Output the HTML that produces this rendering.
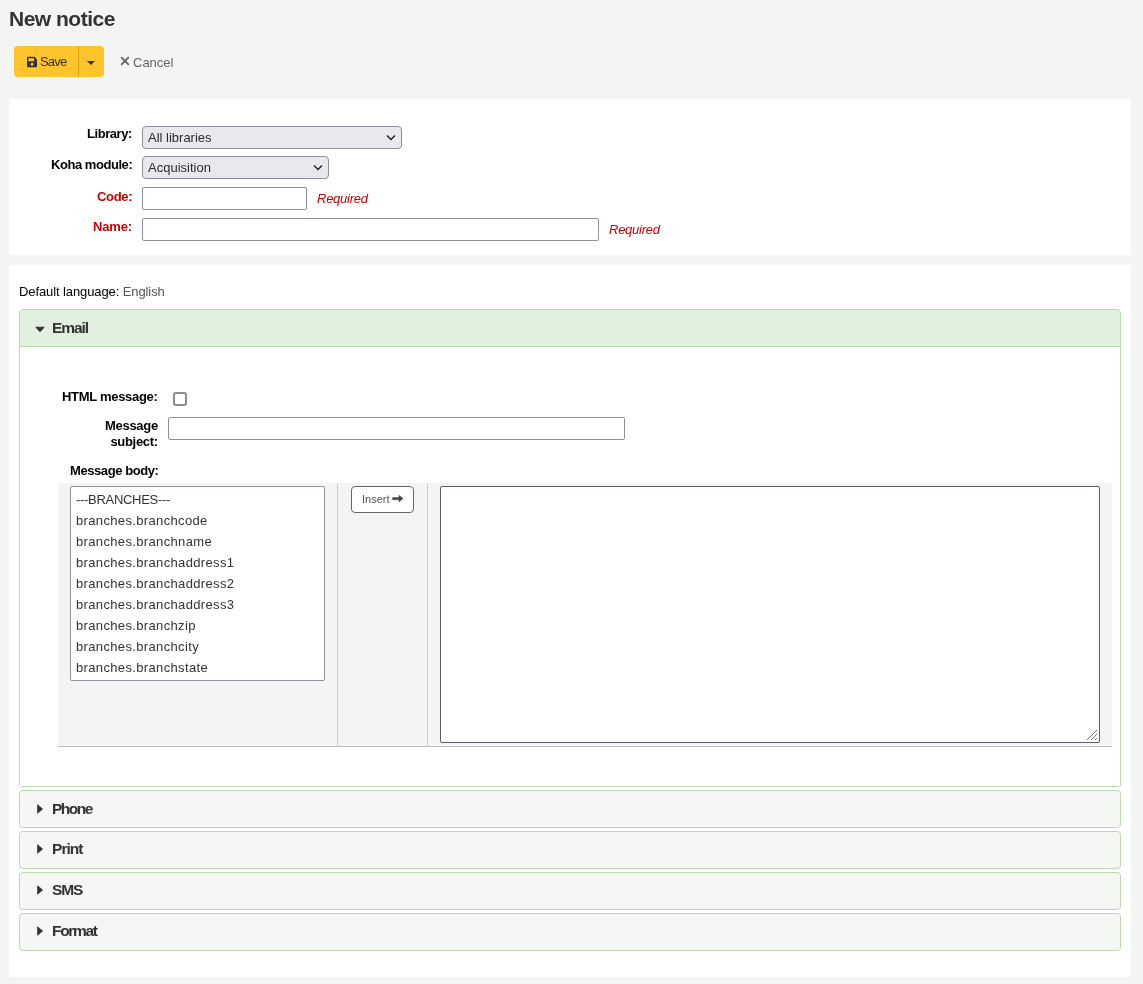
<!DOCTYPE html>
<html>
<head>
<meta charset="utf-8">
<style>
*{box-sizing:border-box;margin:0;padding:0}
html,body{width:1143px;height:984px;overflow:hidden}
.a,.lbl,.req,.acc{will-change:transform}
body{background:#f3f4f4;font-family:"Liberation Sans",sans-serif;font-size:13px;color:#333;position:relative}
.a{position:absolute;white-space:nowrap}
.t{line-height:13px}
.panel{position:absolute;background:#fff}
.lbl{position:absolute;font-weight:bold;color:#000;text-align:right;line-height:13px;white-space:nowrap;letter-spacing:-0.3px}
.red{color:#cc0000}
.sel{position:absolute;background:#e9e9ed;border:1px solid #8f8f9d;border-radius:4px}
.inp{position:absolute;background:#fff;border:1px solid #8f8f9d;border-radius:2px}
.req{position:absolute;font-style:italic;color:#cc0000;line-height:13px;white-space:nowrap;letter-spacing:-0.25px}
.acc{position:absolute;left:19px;width:1102px;height:38px;background:#f5f7f4;border:1px solid #bcd8b1;border-radius:3.5px}
.acc .tri{position:absolute;left:17px;top:13px}
.acc .ttl{position:absolute;left:32px;top:10px;font-weight:bold;font-size:15.5px;line-height:16px;color:#333;letter-spacing:-0.95px}
</style>
</head>
<body>
<!-- heading -->
<div class="a" style="left:9px;top:8px;font-size:21px;line-height:21px;font-weight:bold;color:#333;letter-spacing:-0.5px">New notice</div>

<!-- save split button -->
<div class="a" style="left:14px;top:46px;width:90px;height:31px;background:#ffc32b;border-radius:4px"></div>
<div class="a" style="left:78px;top:46px;width:1px;height:31px;background:#dba210"></div>
<svg class="a" style="left:27px;top:55.5px" width="10" height="12" viewBox="0 0 448 512" preserveAspectRatio="none"><path fill="#333" d="M433.9 129.9l-83.9-83.9A48 48 0 0 0 316.1 32H48C21.5 32 0 53.5 0 80v352c0 26.5 21.5 48 48 48h352c26.5 0 48-21.5 48-48V163.9a48 48 0 0 0-14.1-33.9zM224 416c-35.3 0-64-28.7-64-64 0-35.3 28.7-64 64-64s64 28.7 64 64c0 35.3-28.7 64-64 64zm96-304.5V212c0 6.6-5.4 12-12 12H76c-6.6 0-12-5.4-12-12V108c0-6.6 5.4-12 12-12h228.5c3.2 0 6.2 1.3 8.5 3.5l3.5 3.5A12 12 0 0 1 320 111.5z"/></svg>
<div class="a t" style="left:40px;top:55px;color:#333;letter-spacing:-0.8px">Save</div>
<div class="a" style="left:87px;top:61px;width:0;height:0;border-left:4px solid transparent;border-right:4px solid transparent;border-top:4.5px solid #333"></div>

<!-- cancel -->
<svg class="a" style="left:120px;top:56px" width="10" height="10" viewBox="0 0 10 10"><path d="M1.2 1.2L8.8 8.8M8.8 1.2L1.2 8.8" stroke="#666" stroke-width="1.9" fill="none"/></svg>
<div class="a t" style="left:133px;top:56px;color:#666">Cancel</div>

<!-- panel 1 -->
<div class="panel" style="left:9px;top:99px;width:1122px;height:156px"></div>
<div class="lbl" style="right:1011px;top:127px;letter-spacing:-0.45px">Library:</div>
<div class="lbl" style="right:1011px;top:158px;letter-spacing:-0.45px">Koha module:</div>
<div class="lbl red" style="right:1011px;top:190px">Code:</div>
<div class="lbl red" style="right:1011px;top:220px;letter-spacing:-0.15px">Name:</div>

<div class="sel" style="left:142px;top:126px;width:260px;height:23px"></div>
<div class="a t" style="left:148px;top:131px;color:#2b2b2b">All libraries</div>
<svg class="a" style="left:386px;top:134px" width="10" height="7" viewBox="0 0 10 7"><path d="M1 1.5L5 5.5L9 1.5" stroke="#222" stroke-width="1.5" fill="none"/></svg>
<div class="sel" style="left:142px;top:156px;width:187px;height:23px"></div>
<div class="a t" style="left:148px;top:161px;color:#2b2b2b">Acquisition</div>
<svg class="a" style="left:313px;top:164px" width="10" height="7" viewBox="0 0 10 7"><path d="M1 1.5L5 5.5L9 1.5" stroke="#222" stroke-width="1.5" fill="none"/></svg>
<div class="inp" style="left:142px;top:187px;width:165px;height:23px"></div>
<div class="inp" style="left:142px;top:218px;width:457px;height:23px"></div>
<div class="req" style="left:317px;top:192px">Required</div>
<div class="req" style="left:609px;top:223px">Required</div>

<!-- panel 2 -->
<div class="panel" style="left:9px;top:265px;width:1122px;height:712px"></div>
<div class="a t" style="left:19px;top:285px;color:#000;letter-spacing:-0.1px">Default language: <span style="color:#555">English</span></div>

<!-- email accordion -->
<div class="a" style="left:19px;top:340px;width:1px;height:446px;background:#bcd8b1"></div>
<div class="a" style="left:1120px;top:340px;width:1px;height:446px;background:#bcd8b1"></div>
<div class="a" style="left:21px;top:786px;width:1098px;height:1px;background:#bcd8b1"></div>
<div class="a" style="left:19px;top:309px;width:1102px;height:38px;background:#e2f0df;border:1px solid #bcd8b1;border-radius:4px 4px 0 0"></div>
<svg class="a" style="left:35px;top:326px" width="10" height="7" viewBox="0 0 10 7"><path d="M0.8 1.2H9.2L5 5.8Z" fill="#333" stroke="#333" stroke-width="0.9" stroke-linejoin="round"/></svg>
<div class="a" style="left:52px;top:320px;font-weight:bold;font-size:15.5px;line-height:16px;color:#333;letter-spacing:-1.05px">Email</div>

<div class="lbl" style="right:985px;top:390px">HTML message:</div>
<div class="a" style="left:173px;top:392px;width:14px;height:14px;border:2px solid #8a8a98;border-radius:3px;background:#fff"></div>
<div class="lbl" style="right:985px;top:418px;line-height:15.6px">Message<br>subject:</div>
<div class="inp" style="left:168px;top:417px;width:457px;height:23px"></div>
<div class="lbl" style="right:985px;top:464px;letter-spacing:-0.42px">Message body:</div>

<!-- template table -->
<div class="a" style="left:58px;top:483px;width:1054px;height:264px;background:#f3f4f4;border-bottom:1px solid #bbb"></div>
<div class="a" style="left:337px;top:483px;width:1px;height:263px;background:#ccc"></div>
<div class="a" style="left:427px;top:483px;width:1px;height:263px;background:#ccc"></div>
<div class="inp" style="left:70px;top:486px;width:255px;height:195px;border-radius:2px"></div>
<div class="a" style="left:76px;top:489px;line-height:21px;color:#333;letter-spacing:0.35px"><span style="letter-spacing:-0.3px">---BRANCHES---</span><br>branches.branchcode<br>branches.branchname<br>branches.branchaddress1<br>branches.branchaddress2<br>branches.branchaddress3<br>branches.branchzip<br>branches.branchcity<br>branches.branchstate</div>
<div class="a" style="left:351px;top:486px;width:63px;height:27px;background:#fff;border:1px solid #666;border-radius:4px"></div>
<div class="a" style="left:362px;top:494px;font-size:11px;line-height:11px;color:#555">Insert</div>
<svg class="a" style="left:392px;top:494px" width="12" height="10" viewBox="0 0 12 10"><path d="M0.6 3.5H7V1.3L11 4.6L7 7.9V5.7H0.6Z" fill="#444" stroke="#444" stroke-width="0.5" stroke-linejoin="round"/></svg>
<div class="a" style="left:440px;top:486px;width:660px;height:257px;background:#fff;border:1px solid #5f5f6a;border-radius:2px"></div>
<svg class="a" style="left:1086px;top:729px" width="12" height="12" viewBox="0 0 12 12"><path d="M1 11L11 1M5 11L11 5M9 11L11 9" stroke="#777" stroke-width="1" fill="none"/></svg>

<!-- other accordions -->
<div class="acc" style="top:790px"><svg class="tri" width="6" height="10" viewBox="0 0 6 10"><path d="M0.6 0.8L5.6 5L0.6 9.2Z" fill="#333" stroke="#333" stroke-width="0.8" stroke-linejoin="round"/></svg><div class="ttl" style="letter-spacing:-1.5px">Phone</div></div>
<div class="acc" style="top:831px"><svg class="tri" style="top:12px" width="6" height="10" viewBox="0 0 6 10"><path d="M0.6 0.8L5.6 5L0.6 9.2Z" fill="#333" stroke="#333" stroke-width="0.8" stroke-linejoin="round"/></svg><div class="ttl" style="top:9px">Print</div></div>
<div class="acc" style="top:872px"><svg class="tri" style="top:12px" width="6" height="10" viewBox="0 0 6 10"><path d="M0.6 0.8L5.6 5L0.6 9.2Z" fill="#333" stroke="#333" stroke-width="0.8" stroke-linejoin="round"/></svg><div class="ttl" style="letter-spacing:-1.1px;top:9px">SMS</div></div>
<div class="acc" style="top:913px"><svg class="tri" style="top:12px" width="6" height="10" viewBox="0 0 6 10"><path d="M0.6 0.8L5.6 5L0.6 9.2Z" fill="#333" stroke="#333" stroke-width="0.8" stroke-linejoin="round"/></svg><div class="ttl" style="letter-spacing:-1.3px;top:9px">Format</div></div>
</body>
</html>
